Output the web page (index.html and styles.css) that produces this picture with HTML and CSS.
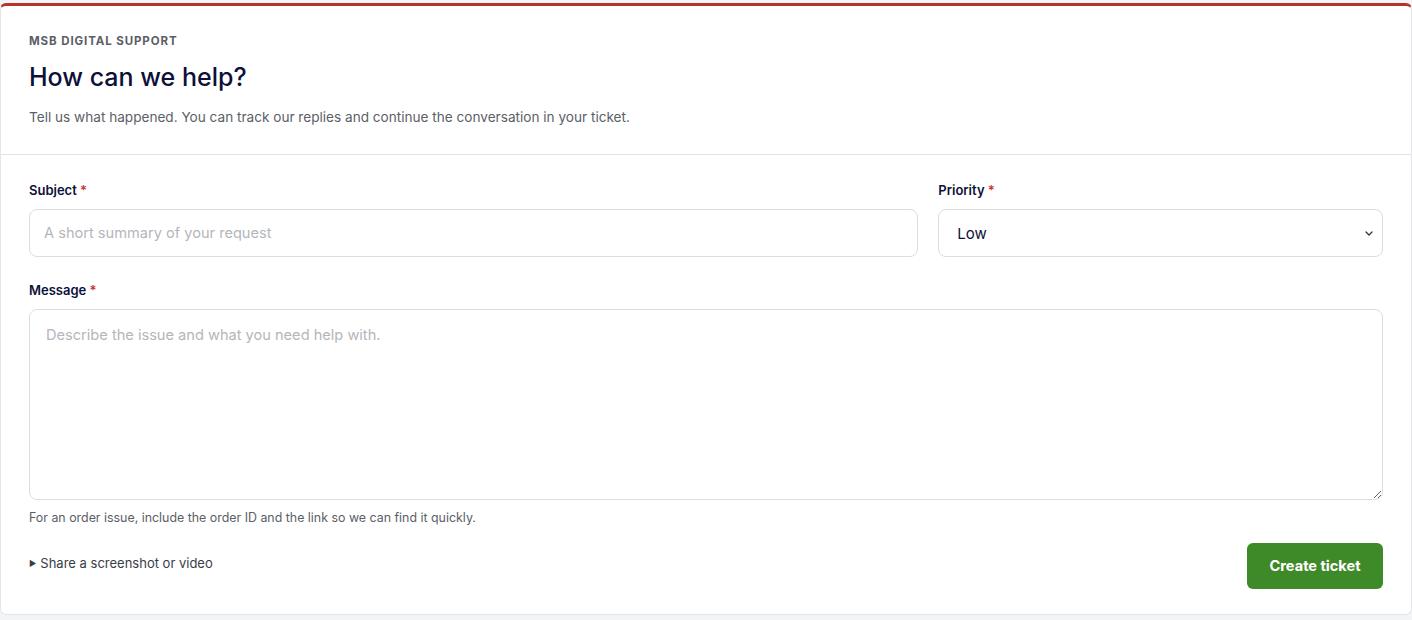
FILE: index.html
```html
<!DOCTYPE html>
<html lang="en">

<head>
    <meta charset="UTF-8">
    <meta name="viewport" content="width=device-width, initial-scale=1.0">
    <title>MSB Digital Support</title>
    <link rel="stylesheet" href="styles.css">
</head>

<body>
    <div class="ticket-card">
        <div class="ticket-head">
            <p class="eyebrow">MSB DIGITAL SUPPORT</p>
            <h1>How can we help?</h1>
            <p class="intro">Tell us what happened. You can track our replies and continue the conversation in your ticket.</p>
        </div>
        <form class="ticket-form" onsubmit="return false">
            <div class="row">
                <div class="field">
                    <label for="subject">Subject <span class="req">*</span></label>
                    <input id="subject" type="text" placeholder="A short summary of your request">
                </div>
                <div class="field">
                    <label for="priority">Priority <span class="req">*</span></label>
                    <div class="select-wrap">
                        <select id="priority">
                            <option>Low</option>
                            <option>Normal</option>
                            <option>High</option>
                            <option>Urgent</option>
                        </select>
                        <svg class="chevron" width="8" height="5" viewBox="0 0 8 5">
                            <path d="M1 1l3 3 3-3" fill="none" stroke="#333" stroke-width="1.3" stroke-linecap="round" stroke-linejoin="round"/>
                        </svg>
                    </div>
                </div>
            </div>
            <div class="field">
                <label for="message">Message <span class="req">*</span></label>
                <textarea id="message" placeholder="Describe the issue and what you need help with."></textarea>
                <p class="hint">For an order issue, include the order ID and the link so we can find it quickly.</p>
            </div>
            <div class="form-foot">
                <details>
                    <summary>Share a screenshot or video</summary>
                </details>
                <button type="submit" class="submit-btn">Create ticket</button>
            </div>
        </form>
    </div>
</body>

</html>
```

FILE: styles.css
```css
:root {
    --brand-red: #b5342a;
    --navy: #0d1038;
    --text-muted: #5b5e66;
    --border: #dcdde0;
    --green: #3f8a28;
    --font-family: "Inter", "Noto Sans", Arial, sans-serif;
}

* {
    margin: 0;
    padding: 0;
    box-sizing: border-box;
}

body {
    font-family: var(--font-family);
    background: #f3f4f6;
    color: var(--navy);
    padding-top: 3px;
}

.ticket-card {
    background: #fff;
    border: 1px solid #e4e5e8;
    border-top: 3px solid var(--brand-red);
    border-radius: 6px;
    height: 612px;
}

.ticket-head {
    padding: 27px 28px 0;
    height: 149px;
    border-bottom: 1px solid #e2e3e6;
}

.eyebrow {
    font-size: 11.5px;
    font-weight: 700;
    letter-spacing: 0.9px;
    color: var(--text-muted);
    line-height: 16px;
}

h1 {
    font-size: 25px;
    font-weight: 500;
    color: var(--navy);
    margin-top: 12px;
    line-height: 32px;
}

.intro {
    font-size: 13.6px;
    color: var(--text-muted);
    margin-top: 15px;
    line-height: 18px;
}

.ticket-form {
    padding: 26px 28px 0;
}

.row {
    display: grid;
    grid-template-columns: 2fr 1fr;
    gap: 20px;
    margin-bottom: 24px;
}

.field label {
    display: block;
    font-size: 13px;
    font-weight: 600;
    color: var(--navy);
    line-height: 18px;
    margin-bottom: 10px;
}

.req {
    color: #c8322b;
}

.field input,
.field select,
.field textarea {
    width: 100%;
    font-family: inherit;
    border: 1px solid var(--border);
    border-radius: 8px;
    background: #fff;
    outline: none;
}

.field input {
    height: 48px;
    padding: 0 14px;
    font-size: 14.6px;
}

::placeholder {
    color: #b4b6bb;
}

.select-wrap {
    position: relative;
}

.field select {
    appearance: none;
    height: 48px;
    padding: 0 18px;
    font-size: 15px;
    color: var(--navy);
}

.chevron {
    position: absolute;
    right: 10px;
    top: 22px;
    pointer-events: none;
}

.field textarea {
    height: 191px;
    padding: 16px 16px;
    font-size: 14.6px;
    resize: vertical;
    display: block;
}

.hint {
    font-size: 12.4px;
    color: var(--text-muted);
    margin-top: 10px;
    line-height: 16px;
}

.form-foot {
    display: flex;
    justify-content: space-between;
    align-items: flex-start;
    margin-top: 17px;
}

details {
    margin-top: 11px;
}

summary {
    list-style: none;
    font-size: 13px;
    line-height: 18px;
    color: #3a3d45;
    cursor: pointer;
}

summary::-webkit-details-marker {
    display: none;
}

summary::before {
    content: "\25B6";
    font-size: 8px;
    margin-right: 4px;
    vertical-align: 2px;
}

.submit-btn {
    background: var(--green);
    color: #fff;
    border: none;
    border-radius: 6px;
    font-family: inherit;
    font-size: 14.6px;
    font-weight: 700;
    width: 136px;
    height: 46px;
    cursor: pointer;
}
```
